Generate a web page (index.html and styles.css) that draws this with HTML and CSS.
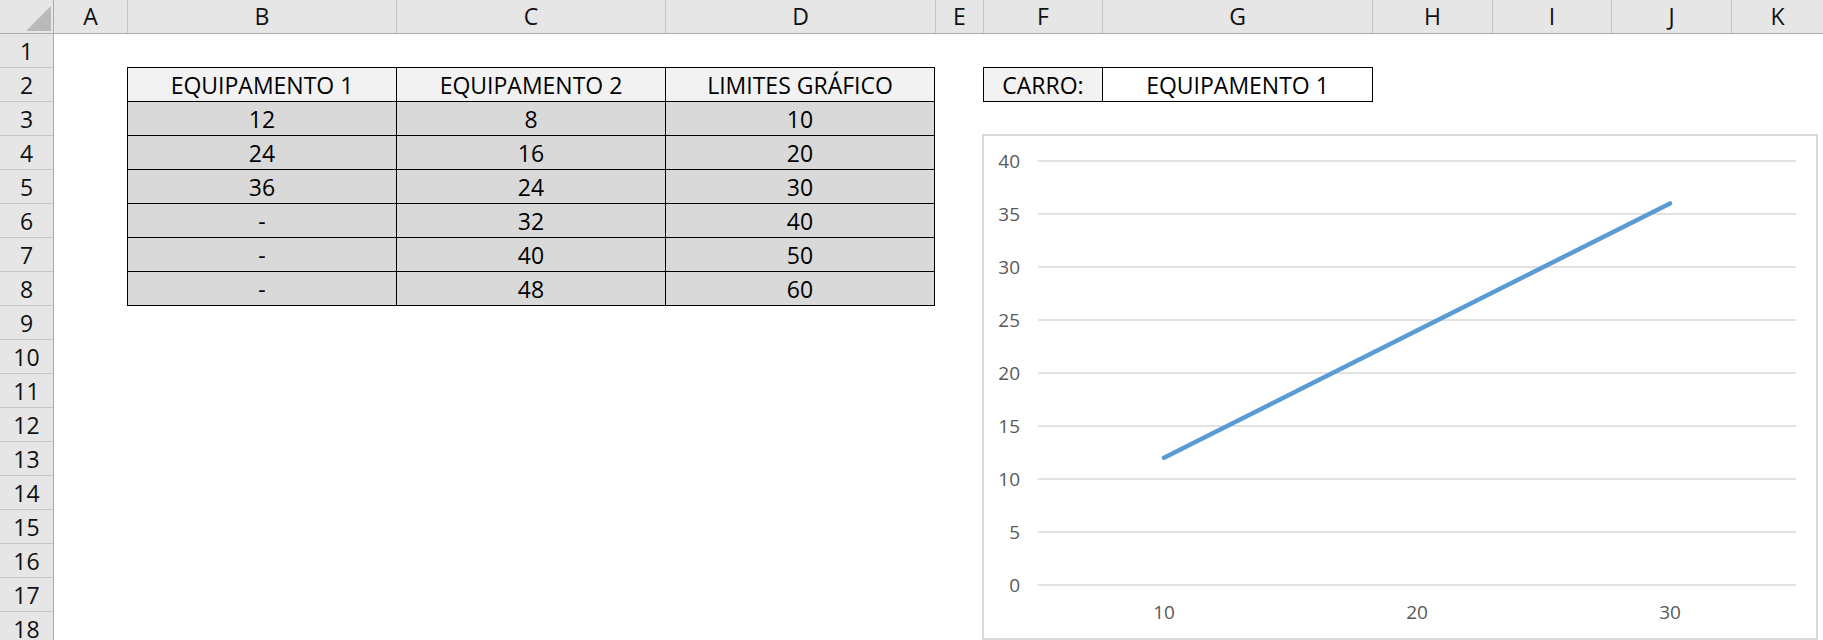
FILE: index.html
```html
<!DOCTYPE html>
<html lang="pt">
<head>
  <meta charset="UTF-8">
  <title>Planilha - Equipamentos</title>
  <link rel="stylesheet" href="styles.css">
</head>
<body>
  <div class="sheet">
    <div class="col-heads">
      <div class="corner">
        <svg width="25" height="25" viewBox="0 0 25 25"><polygon points="25,0 25,25 0,25" fill="#b9b9b9"/></svg>
      </div>
      <div class="ch w-a">A</div>
      <div class="ch w-b">B</div>
      <div class="ch w-b">C</div>
      <div class="ch w-d">D</div>
      <div class="ch w-e">E</div>
      <div class="ch w-f">F</div>
      <div class="ch w-d">G</div>
      <div class="ch w-h">H</div>
      <div class="ch w-f">I</div>
      <div class="ch w-h">J</div>
      <div class="ch w-k">K</div>
    </div>

    <div class="body">
      <div class="row-heads">
        <div class="rh">1</div>
        <div class="rh">2</div>
        <div class="rh">3</div>
        <div class="rh">4</div>
        <div class="rh">5</div>
        <div class="rh">6</div>
        <div class="rh">7</div>
        <div class="rh">8</div>
        <div class="rh">9</div>
        <div class="rh">10</div>
        <div class="rh">11</div>
        <div class="rh">12</div>
        <div class="rh">13</div>
        <div class="rh">14</div>
        <div class="rh">15</div>
        <div class="rh">16</div>
        <div class="rh">17</div>
        <div class="rh">18</div>
      </div>

      <div class="cells">
        <div class="data-table">
          <div class="cell hd">EQUIPAMENTO 1</div>
          <div class="cell hd">EQUIPAMENTO 2</div>
          <div class="cell hd">LIMITES GRÁFICO</div>
          <div class="cell val">12</div><div class="cell val">8</div><div class="cell val">10</div>
          <div class="cell val">24</div><div class="cell val">16</div><div class="cell val">20</div>
          <div class="cell val">36</div><div class="cell val">24</div><div class="cell val">30</div>
          <div class="cell val">-</div><div class="cell val">32</div><div class="cell val">40</div>
          <div class="cell val">-</div><div class="cell val">40</div><div class="cell val">50</div>
          <div class="cell val">-</div><div class="cell val">48</div><div class="cell val">60</div>
        </div>

        <div class="carro">
          <div class="cell hd">CARRO:</div>
          <div class="cell white">EQUIPAMENTO 1</div>
        </div>

        <div class="chart">
          <svg class="plot" width="832" height="502" viewBox="0 0 832 502">
            <g class="grid">
              <line x1="54" y1="25" x2="812" y2="25"/>
              <line x1="54" y1="78" x2="812" y2="78"/>
              <line x1="54" y1="131" x2="812" y2="131"/>
              <line x1="54" y1="184" x2="812" y2="184"/>
              <line x1="54" y1="237" x2="812" y2="237"/>
              <line x1="54" y1="290" x2="812" y2="290"/>
              <line x1="54" y1="343" x2="812" y2="343"/>
              <line x1="54" y1="396" x2="812" y2="396"/>
              <line x1="54" y1="449" x2="812" y2="449"/>
            </g>
            <g class="ylabels">
              <text x="36" y="32">40</text>
              <text x="36" y="85">35</text>
              <text x="36" y="138">30</text>
              <text x="36" y="191">25</text>
              <text x="36" y="244">20</text>
              <text x="36" y="297">15</text>
              <text x="36" y="350">10</text>
              <text x="36" y="403">5</text>
              <text x="36" y="456">0</text>
            </g>
            <g class="xlabels">
              <text x="180" y="483">10</text>
              <text x="433" y="483">20</text>
              <text x="686" y="483">30</text>
            </g>
            <polyline class="series" points="180,321.8 433,194.6 686,67.4"/>
          </svg>
        </div>
      </div>
    </div>
  </div>
</body>
</html>
```

FILE: styles.css
```css
body {
  margin: 0;
  background: #fff;
  font-family: 'Open Sans', 'Noto Sans', sans-serif;
  font-size: 23px;
  color: #000;
  overflow: hidden;
}
.sheet {
  width: 1823px;
  height: 640px;
  display: flex;
  flex-direction: column;
}
.col-heads {
  display: flex;
  height: 34px;
  background: #e6e6e6;
  border-bottom: 1px solid #ababab;
  box-sizing: border-box;
}
.corner {
  width: 54px;
  flex: none;
  box-sizing: border-box;
  border-right: 1px solid #ababab;
  display: flex;
  justify-content: flex-end;
  align-items: flex-end;
  padding: 0 2px 2px 0;
}
.corner svg {
  display: block;
}
.ch {
  flex: none;
  box-sizing: border-box;
  border-right: 1px solid #c6c6c6;
  text-align: center;
  line-height: 33px;
  color: #111;
}
.w-a { width: 74px; }
.w-b { width: 269px; }
.w-d { width: 270px; }
.w-e { width: 48px; }
.w-f { width: 119px; }
.w-h { width: 120px; }
.w-k { flex: 1; border-right: none; }

.body {
  display: flex;
  flex: 1;
  min-height: 0;
}
.row-heads {
  width: 54px;
  flex: none;
  background: #e6e6e6;
  border-right: 1px solid #ababab;
  box-sizing: border-box;
}
.rh {
  height: 34px;
  box-sizing: border-box;
  border-bottom: 1px solid #c6c6c6;
  text-align: center;
  line-height: 34px;
  color: #111;
}
.cells {
  flex: 1;
  display: grid;
  grid-template-columns: 73px 269px 269px 270px 48px 119px 270px 120px 119px 120px 1fr;
  grid-template-rows: 33px repeat(17, 34px);
}

.cell {
  text-align: center;
  line-height: 33px;
  height: 33px;
  padding-top: 1px;
  box-sizing: border-box;
  white-space: nowrap;
}
.hd { background: #f2f2f2; }
.val { background: #d9d9d9; }
.white { background: #fff; }

.data-table {
  grid-column: 2 / 5;
  grid-row: 2 / 9;
  align-self: start;
  display: grid;
  grid-template-columns: repeat(3, 1fr);
  grid-auto-rows: 33px;
  gap: 1px;
  padding: 1px;
  background: #000;
}
.carro {
  grid-column: 6 / 8;
  grid-row: 2 / 3;
  align-self: start;
  margin-right: -1px;
  display: grid;
  grid-template-columns: 118px 1fr;
  gap: 1px;
  padding: 1px;
  background: #000;
}

.chart {
  grid-column: 6 / 12;
  grid-row: 4 / 19;
  justify-self: start;
  align-self: start;
  width: 836px;
  height: 506px;
  margin: -1px 0 0 -1px;
  border: 2px solid #d9d9d9;
  box-sizing: border-box;
  background: #fff;
}
.plot {
  display: block;
}
.grid line {
  stroke: #d9d9d9;
  stroke-width: 1.7;
}
.ylabels text,
.xlabels text {
  font-family: 'Open Sans', 'Noto Sans', sans-serif;
  font-size: 19px;
  fill: #595959;
}
.ylabels text {
  text-anchor: end;
}
.xlabels text {
  text-anchor: middle;
}
.series {
  fill: none;
  stroke: #5b9bd5;
  stroke-width: 4.5;
  stroke-linecap: round;
  stroke-linejoin: round;
}
```
